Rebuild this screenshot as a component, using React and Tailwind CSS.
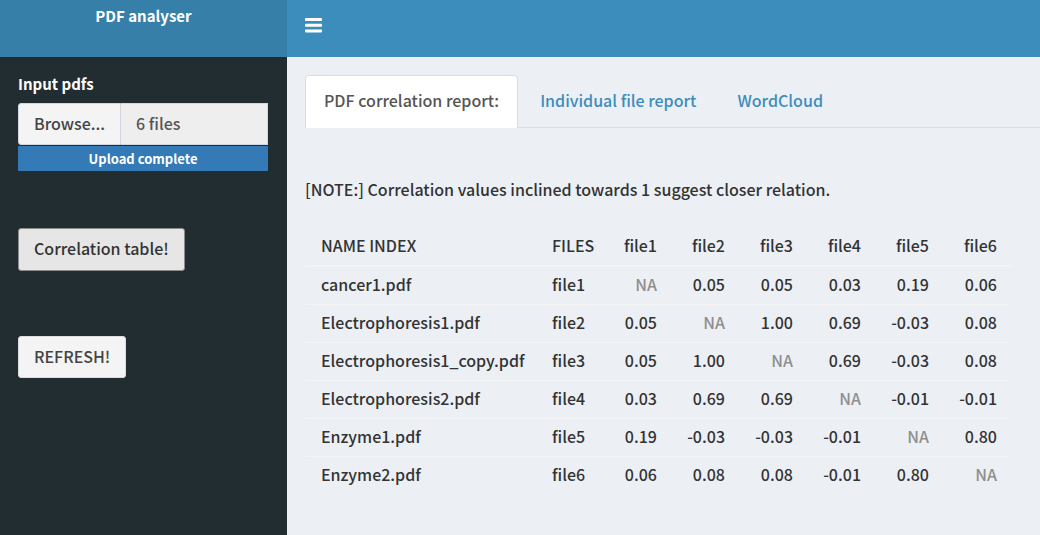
import React from "react";

const columns = ["file1", "file2", "file3", "file4", "file5", "file6"];

const rows = [
  { name: "cancer1.pdf", file: "file1", values: ["NA", "0.05", "0.05", "0.03", "0.19", "0.06"] },
  { name: "Electrophoresis1.pdf", file: "file2", values: ["0.05", "NA", "1.00", "0.69", "-0.03", "0.08"] },
  { name: "Electrophoresis1_copy.pdf", file: "file3", values: ["0.05", "1.00", "NA", "0.69", "-0.03", "0.08"] },
  { name: "Electrophoresis2.pdf", file: "file4", values: ["0.03", "0.69", "0.69", "NA", "-0.01", "-0.01"] },
  { name: "Enzyme1.pdf", file: "file5", values: ["0.19", "-0.03", "-0.03", "-0.01", "NA", "0.80"] },
  { name: "Enzyme2.pdf", file: "file6", values: ["0.06", "0.08", "0.08", "-0.01", "0.80", "NA"] },
];

function Header() {
  return (
    <header className="flex h-[57px] bg-[#3c8dbc] text-white">
      <div className="w-[287px] shrink-0 bg-[#367fa9] pt-1 text-center text-[15px] font-bold">PDF analyser</div>
      <button type="button" aria-label="Toggle navigation" className="flex items-center self-start px-[18px] pt-[18px]">
        <svg viewBox="0 0 17 15" className="h-[15px] w-[17px]" fill="currentColor" aria-hidden="true">
          <rect x="0" y="0" width="17" height="3" rx="0.8" />
          <rect x="0" y="5.7" width="17" height="3" rx="0.8" />
          <rect x="0" y="11.4" width="17" height="3" rx="0.8" />
        </svg>
      </button>
    </header>
  );
}

function Sidebar() {
  return (
    <aside className="flex w-[287px] shrink-0 flex-col items-start bg-[#222d32] px-[18px] pt-[15px]">
      <label htmlFor="pdfs" className="mb-[7px] text-[15px] font-bold text-white">Input pdfs</label>
      <div className="flex h-[42px] w-[250px]">
        <label className="flex shrink-0 cursor-pointer items-center rounded-l-[3px] border border-[#d2d6de] bg-[#f4f4f4] px-[15px] pb-[2px] text-[#444]">
          Browse...
          <input id="pdfs" type="file" multiple accept=".pdf" className="sr-only" />
        </label>
        <input
          type="text"
          readOnly
          aria-label="Selected files"
          value="6 files"
          className="min-w-0 flex-1 border border-l-0 border-[#d2d6de] bg-[#eee] px-[15px] pb-[2px] text-[#555] outline-none"
        />
      </div>
      <div className="mt-px h-[25px] w-[250px] rounded-[1px] bg-[#337ab7] text-center text-[13px] leading-[25px] font-bold text-white">
        Upload complete
      </div>
      <button type="button" className="mt-[57px] h-[43px] rounded-[3px] border border-[#8c8c8c] bg-[#e6e6e6] px-[15px] pb-[3px] text-[#333]">
        Correlation table!
      </button>
      <button type="button" className="mt-[65px] h-[42px] rounded-[3px] border border-[#ddd] bg-[#f4f4f4] px-[15px] pb-[3px] text-[#444]">
        REFRESH!
      </button>
    </aside>
  );
}

function Tabs() {
  return (
    <nav className="flex h-[53px] gap-[3px] border-b border-[#ddd] text-[#3c8dbc]">
      <a href="#correlation" aria-current="page" className="-mb-px rounded-t-[4px] border border-b-0 border-[#ddd] bg-white px-[18px] pt-[12px] text-[#555]">
        PDF correlation report:
      </a>
      <a href="#individual" className="px-[19px] pt-[13px]">Individual file report</a>
      <a href="#wordcloud" className="px-[19px] pt-[13px]">WordCloud</a>
    </nav>
  );
}

function CorrelationTable() {
  return (
    <table className="mt-[26px] w-[706px] table-fixed border-collapse">
      <colgroup>
        <col className="w-[231px]" />
        <col className="w-[72px]" />
        <col className="w-[63px]" />
        <col span={5} />
      </colgroup>
      <thead>
        <tr className="h-[39px] border-b-2 border-[#f4f4f4]">
          <th className="pb-[2px] pl-4 text-left font-medium">NAME INDEX</th>
          <th className="pb-[2px] pl-4 text-left font-medium">FILES</th>
          {columns.map((column) => (
            <th key={column} className="pr-[14px] pb-[2px] text-right font-medium">{column}</th>
          ))}
        </tr>
      </thead>
      <tbody>
        {rows.map((row) => (
          <tr key={row.file} className="h-[38px] border-b border-[#f4f4f4] last:border-b-0">
            <td className="pb-[2px] pl-4">{row.name}</td>
            <td className="pb-[2px] pl-4">{row.file}</td>
            {row.values.map((value, i) => (
              <td key={columns[i]} className={value === "NA" ? "pr-[14px] pb-[2px] text-right text-[#8f8f8f]" : "pr-[14px] pb-[2px] text-right"}>
                {value}
              </td>
            ))}
          </tr>
        ))}
      </tbody>
    </table>
  );
}

export default function App() {
  return (
    <div className="flex min-h-screen flex-col font-['Noto_Sans_CJK_SC',sans-serif] text-[16px] leading-[24px] font-medium text-[#333]">
      <Header />
      <div className="flex flex-1">
        <Sidebar />
        <main className="min-w-0 flex-1 bg-[#ecf0f5] pt-[18px] pl-[18px]">
          <Tabs />
          <p className="mt-[49px]">[NOTE:] Correlation values inclined towards 1 suggest closer relation.</p>
          <CorrelationTable />
        </main>
      </div>
    </div>
  );
}
